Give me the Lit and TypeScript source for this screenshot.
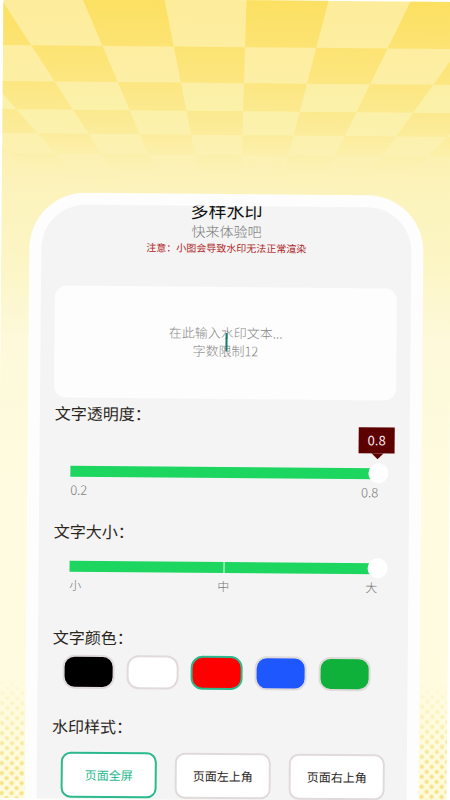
import { LitElement, html, svg, css } from "lit";
import { customElement, state } from "lit/decorators.js";
import { classMap } from "lit/directives/class-map.js";
import { styleMap } from "lit/directives/style-map.js";

/* Horizontal rules of the receding checkerboard and its perspective. */
const ROWS = [-20, 47, 83, 111, 135, 155, 172, 186];
const edgeX = (k: number, y: number) => 243 - 0.022 * y + k * (82 - 0.228 * y);

const COLORS = [
  { name: "黑色", value: "#000000" },
  { name: "白色", value: "#ffffff" },
  { name: "红色", value: "#ff0000" },
  { name: "蓝色", value: "#1f57ff" },
  { name: "绿色", value: "#0fb13a" },
];

const STYLES = ["页面全屏", "页面左上角", "页面右上角"];

@customElement("checker-board")
export class CheckerBoard extends LitElement {
  static styles = css`
    :host { display: block; }
    .board { display: block; width: 100%; height: auto; }
  `;

  render() {
    const tiles = [];
    for (let r = 0; r < ROWS.length - 1; r++) {
      const top = ROWS[r];
      const bottom = ROWS[r + 1];
      for (let k = -7; k < 7; k++) {
        if ((k + r) % 2 !== 0) continue;
        const points = [
          [edgeX(k, top), top],
          [edgeX(k + 1, top), top],
          [edgeX(k + 1, bottom), bottom],
          [edgeX(k, bottom), bottom],
        ];
        tiles.push(svg`<polygon fill="url(#tile)" points=${points.map((p) => p.join(",")).join(" ")}></polygon>`);
      }
    }
    return html`
      <svg class="board" viewBox="0 0 450 190" aria-hidden="true">
        <defs>
          <linearGradient id="tile" gradientUnits="userSpaceOnUse" x1="0" y1="0" x2="0" y2="180">
            <stop offset="0" stop-color="#fce062"></stop>
            <stop offset="0.4" stop-color="#fce477" stop-opacity="0.9"></stop>
            <stop offset="0.7" stop-color="#fce684" stop-opacity="0.55"></stop>
            <stop offset="0.85" stop-color="#fce88c" stop-opacity="0.2"></stop>
            <stop offset="1" stop-color="#fcefa8" stop-opacity="0"></stop>
          </linearGradient>
        </defs>
        ${tiles}
      </svg>
    `;
  }
}

@customElement("app-root")
export class AppRoot extends LitElement {
  @state() private color = 2;
  @state() private placement = 0;

  static styles = css`
    :host {
      display: block;
      min-height: 100vh;
      overflow: hidden;
      background: #ffffff;
      font-family: "Noto Sans CJK SC", "Noto Sans", sans-serif;
      color: #2b261c;
    }
    * { box-sizing: border-box; }
    .poster {
      display: flow-root;
      position: relative;
      height: 100vh;
      overflow: hidden;
      transform: rotate(0.5deg);
      background: linear-gradient(#fdec9a, #fdeea2 60px, #fbf1a9 110px, #fcf1b0 150px, #fcf3bc 190px, #fcf5c4 260px, #fdf9da 340px, #fefbe0 500px, #fefbdf);
    }
    .board { position: absolute; inset: 0 0 auto; }
    .dots {
      position: absolute;
      inset: auto 0 0;
      height: 120px;
      background-image:
        radial-gradient(circle, #f5e07c 1px, #f5e07c00 3px),
        radial-gradient(circle, #f5e07c 1px, #f5e07c00 3px);
      background-size: 10px 10px;
      background-position: 0 0, 5px 5px;
      mask-image: linear-gradient(transparent, #000 80%);
    }
    .phone {
      position: relative;
      margin: 194px 28px 0;
      padding: 12px 12px 0;
      border-radius: 56px 56px 0 0;
      background: #fdfdfd;
    }
    .screen {
      overflow: hidden;
      border-radius: 44px 44px 0 0;
      background: #f4f4f4;
      padding: 0 14px 40px;
    }
    header { text-align: center; margin-top: -8px; }
    h1 { margin: 0; font-size: 18px; line-height: 24px; font-weight: 400; color: #111111; }
    .lead { margin: 0; font-size: 14px; line-height: 18px; font-weight: 300; color: #777777; }
    .warn { margin: 0; font-size: 10px; line-height: 16px; color: #b01f1f; }
    .entry { position: relative; margin-top: 31px; border-radius: 12px; background: #fdfdfd; }
    textarea {
      display: block;
      width: 100%;
      height: 112px;
      padding: 37px 10px;
      border: 0;
      outline: 0;
      resize: none;
      overflow: hidden;
      background: transparent;
      font: 300 13px/18px "Noto Sans CJK SC", "Noto Sans", sans-serif;
      text-align: center;
      color: #2b261c;
    }
    textarea::placeholder { color: #888888; opacity: 1; }
    .caret {
      position: absolute;
      left: 50%;
      top: 46px;
      width: 2px;
      height: 18px;
      background: #19796e;
    }
    h2 { margin: 0; padding-left: 1px; font-size: 16px; line-height: 24px; font-weight: 400; }
    .opacity-title { margin-top: 3px; }
    .range { position: relative; padding: 0 7px 0 17px; }
    .opacity { margin-top: 36px; }
    .size { margin-top: 13px; }
    input[type="range"] {
      appearance: none;
      display: block;
      width: 100%;
      height: 20px;
      margin: 0;
      background: transparent;
    }
    input[type="range"]::-webkit-slider-runnable-track {
      height: 20px;
      background: linear-gradient(#1dd660, #1dd660) 0 center / calc(100% - 10px) 11px no-repeat;
    }
    .size input[type="range"]::-webkit-slider-runnable-track {
      background:
        linear-gradient(#f4f4f4, #f4f4f4) calc(50% - 5px) center / 1px 11px no-repeat,
        linear-gradient(#1dd660, #1dd660) 0 center / calc(100% - 10px) 11px no-repeat;
    }
    input[type="range"]::-webkit-slider-thumb {
      appearance: none;
      width: 20px;
      height: 20px;
      border-radius: 50%;
      background: #ffffff;
    }
    .bubble {
      position: absolute;
      right: 1px;
      bottom: 100%;
      margin-bottom: 10px;
      width: 36px;
      text-align: center;
      background: #5c0000;
      color: #f6eeee;
      font-size: 13px;
      line-height: 26px;
    }
    .bubble::after {
      content: "";
      position: absolute;
      left: 50%;
      top: 100%;
      margin-left: -5px;
      border: 6px solid transparent;
      border-top-color: #5c0000;
      border-bottom: 0;
    }
    .scale {
      display: flex;
      justify-content: space-between;
      padding-right: 10px;
      font-size: 13px;
      line-height: 18px;
      font-weight: 300;
      color: #777777;
    }
    .size .scale { font-size: 12px; }
    .size-title { margin-top: 20px; }
    .color-title { margin-top: 31px; }
    .style-title { margin-top: 25px; }
    .swatches { display: flex; gap: 12px; margin: 6px 0 0 11px; }
    .swatch {
      width: 52px;
      height: 34px;
      padding: 0;
      border: 2px solid #e1dada;
      border-radius: 12px;
    }
    .swatch.on { border-color: #2bb98d; }
    .styles { display: flex; gap: 18px; margin: 14px 0 0 10px; }
    .style {
      width: 96px;
      height: 46px;
      flex: none;
      padding: 0;
      border: 2px solid #e1dada;
      border-radius: 10px;
      background: #ffffff;
      font: 12px/18px "Noto Sans CJK SC", "Noto Sans", sans-serif;
      color: #2b261c;
    }
    .style.on { border-color: #2bb98d; color: #2bb98d; }
  `;

  render() {
    return html`
      <main class="poster">
        <checker-board class="board"></checker-board>
        <div class="dots"></div>
        <section class="phone">
          <div class="screen">
            <header>
              <h1>多样水印</h1>
              <p class="lead">快来体验吧</p>
              <p class="warn">注意：小图会导致水印无法正常渲染</p>
            </header>
            <div class="entry">
              <textarea aria-label="水印文本" maxlength="12" placeholder=${"在此输入水印文本...\n字数限制12"}></textarea>
              <span class="caret"></span>
            </div>

            <h2 class="opacity-title"><label for="opacity">文字透明度：</label></h2>
            <div class="range opacity">
              <output class="bubble" for="opacity">0.8</output>
              <input id="opacity" type="range" min="0.2" max="0.8" step="0.1" value="0.8" />
              <div class="scale"><span>0.2</span><span>0.8</span></div>
            </div>

            <h2 class="size-title"><label for="size">文字大小：</label></h2>
            <div class="range size">
              <input id="size" type="range" min="0" max="2" step="1" value="2" />
              <div class="scale"><span>小</span><span>中</span><span>大</span></div>
            </div>

            <h2 class="color-title">文字颜色：</h2>
            <div class="swatches">
              ${COLORS.map(
                (c, i) => html`<button
                  class=${classMap({ swatch: true, on: i === this.color })}
                  style=${styleMap({ backgroundColor: c.value })}
                  aria-label=${c.name}
                  @click=${() => (this.color = i)}
                ></button>`
              )}
            </div>

            <h2 class="style-title">水印样式：</h2>
            <div class="styles">
              ${STYLES.map(
                (s, i) => html`<button
                  class=${classMap({ style: true, on: i === this.placement })}
                  @click=${() => (this.placement = i)}
                >${s}</button>`
              )}
            </div>
          </div>
        </section>
      </main>
    `;
  }
}
